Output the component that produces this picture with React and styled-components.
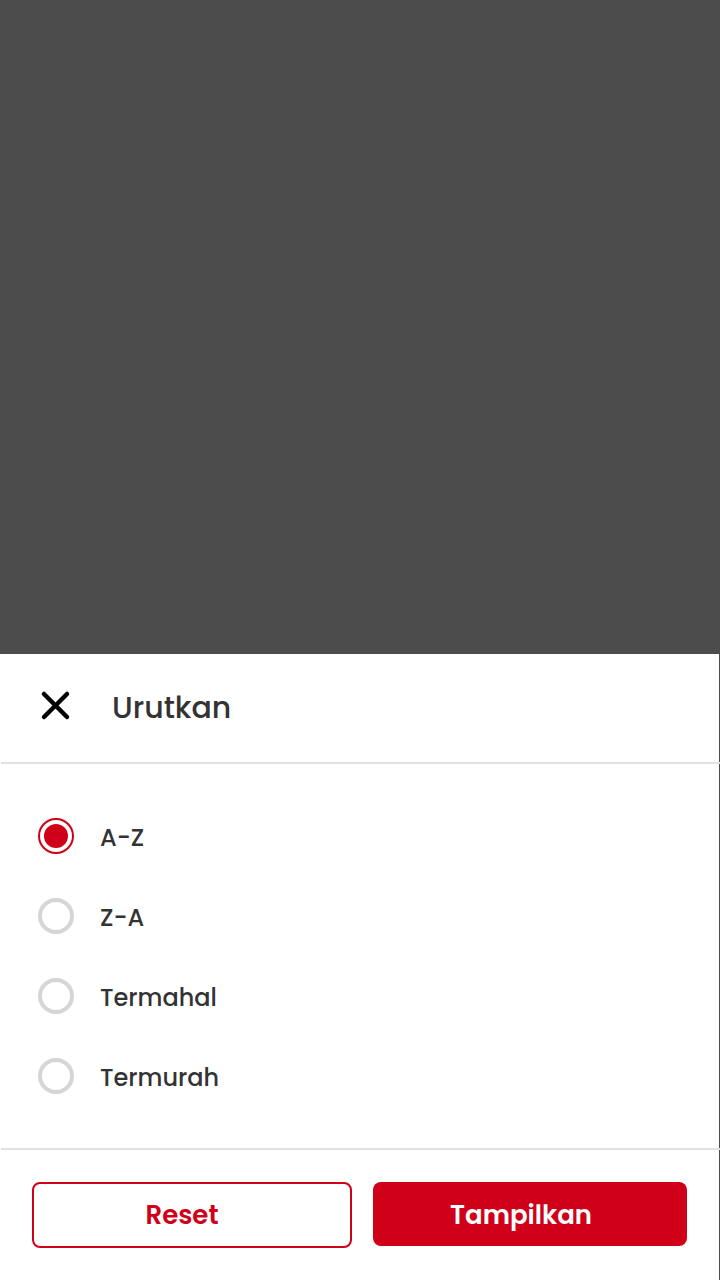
import React, { useState } from "react";
import styled, { createGlobalStyle } from "styled-components";

const GlobalStyle = createGlobalStyle`
  *, *::before, *::after { box-sizing: border-box; }
  body {
    margin: 0;
    background: #4c4c4c;
    color: #333333;
    font-family: Poppins, Inter, "Open Sans", sans-serif;
  }
`;

const Backdrop = styled.main`
  min-height: 100vh;
  display: flex;
  flex-direction: column;
  justify-content: flex-end;
  background: #4c4c4c;
  overflow: hidden;
`;

const Sheet = styled.form`
  margin-right: 1px;
  background: #ffffff;
`;

const Header = styled.header`
  display: flex;
  align-items: center;
  gap: 38px;
  height: 108px;
  padding: 0 36px;
`;

const CloseButton = styled.button`
  display: flex;
  padding: 0;
  margin-bottom: 6px;
  border: 0;
  background: none;
  color: #000000;
  cursor: pointer;
`;

const Title = styled.h1`
  margin: 0;
  font-size: 30px;
  line-height: 44px;
  font-weight: 500;
`;

const Divider = styled.hr`
  height: 2px;
  margin: 0 -1px 0 1px;
  border: 0;
  background: #e0e0e0;
`;

const Options = styled.fieldset`
  margin: 0;
  padding: 32px 38px;
  border: 0;
`;

const Option = styled.label`
  display: flex;
  align-items: center;
  gap: 26px;
  height: 80px;
  font-size: 24px;
  line-height: 36px;
  font-weight: 500;
  cursor: pointer;
`;

const Radio = styled.input`
  appearance: none;
  flex: none;
  width: 36px;
  height: 36px;
  margin: 0;
  border: 4px solid #d5d5d5;
  border-radius: 50%;
  background: #ffffff;
  cursor: pointer;

  &:checked {
    padding: 4px;
    border: 2px solid #d00019;
    background: #d00019 content-box;
  }
`;

const OptionText = styled.span`
  padding-top: 3px;
`;

const Footer = styled.footer`
  display: grid;
  grid-template-columns: 160fr 157fr;
  align-items: start;
  gap: 21px;
  padding: 32px;
`;

const Button = styled.button`
  height: ${(p) => (p.$primary ? 64 : 66)}px;
  padding: ${(p) => (p.$primary ? "2px 18px 0 0" : "0 20px 0 0")};
  border: ${(p) => (p.$primary ? "0" : "2px solid #d00019")};
  border-radius: 8px;
  background: ${(p) => (p.$primary ? "#d00019" : "#ffffff")};
  color: ${(p) => (p.$primary ? "#ffffff" : "#d00019")};
  font-family: inherit;
  font-size: 26px;
  line-height: 40px;
  font-weight: 600;
  cursor: pointer;
`;

const CHOICES = ["A-Z", "Z-A", "Termahal", "Termurah"];

export default function App() {
  const [selected, setSelected] = useState("A-Z");

  return (
    <>
      <GlobalStyle />
      <Backdrop>
        <Sheet onSubmit={(e) => e.preventDefault()}>
          <Header>
            <CloseButton type="button" aria-label="Tutup">
              <svg width="38" height="38" viewBox="0 0 38 38" fill="none" aria-hidden="true">
                <path
                  d="M8 8L31 31M31 8L8 31"
                  stroke="currentColor"
                  strokeWidth="4.5"
                  strokeLinecap="round"
                />
              </svg>
            </CloseButton>
            <Title>Urutkan</Title>
          </Header>
          <Divider />
          <Options aria-label="Urutkan">
            {CHOICES.map((choice) => (
              <Option key={choice}>
                <Radio
                  type="radio"
                  name="sort"
                  value={choice}
                  checked={selected === choice}
                  onChange={() => setSelected(choice)}
                />
                <OptionText>{choice}</OptionText>
              </Option>
            ))}
          </Options>
          <Divider />
          <Footer>
            <Button type="button" onClick={() => setSelected("A-Z")}>
              Reset
            </Button>
            <Button type="submit" $primary>
              Tampilkan
            </Button>
          </Footer>
        </Sheet>
      </Backdrop>
    </>
  );
}
